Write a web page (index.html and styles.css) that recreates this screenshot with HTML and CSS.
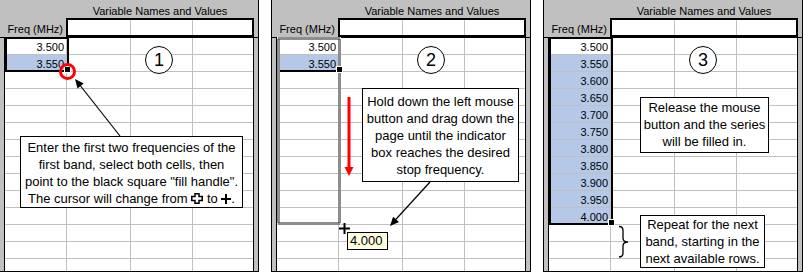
FILE: index.html
```html
<!DOCTYPE html>
<html lang="en">
<head>
    <meta charset="UTF-8">
    <meta name="viewport" content="width=device-width, initial-scale=1.0">
    <title>Filling in a frequency series</title>
    <link rel="stylesheet" href="styles.css">
</head>
<body>
    <div class="steps">
        <!-- Step 1: select the first two cells -->
        <div class="sheet">
            <div class="head">
                <div class="title">Variable Names and Values</div>
                <div class="head-row">
                    <div class="freq-label">Freq (MHz)</div>
                    <div class="names"><span></span><span></span><span></span></div>
                </div>
            </div>
            <div class="sheet-body">
                <div class="row-head"></div>
                <div class="cells">
                    <div class="cell">3.500</div>
                    <div class="cell picked">3.550</div>
                </div>
                <div class="row-tail"></div>
            </div>
            <div class="selection sel-two"></div>
            <svg class="marks" viewBox="0 0 258 271">
                <line x1="120" y1="136" x2="79" y2="84" stroke="#000" stroke-width="1.2"/>
                <polygon points="75,79 83.7,83.6 77.5,88.6" fill="#000"/>
            </svg>
            <div class="fill-handle"></div>
            <div class="red-ring"></div>
            <div class="step-num">1</div>
            <div class="note note-enter">
                Enter the first two frequencies of the<br>
                first band, select both cells, then<br>
                point to the black square "fill handle".<br>
                The cursor will change from
                <svg class="ico" width="12" height="11" viewBox="0 0 12 11"><path d="M4 .75H8V3.5H11.25V7.5H8V10.25H4V7.5H.75V3.5H4Z" fill="#fff" stroke="#000" stroke-width="1.5"/></svg>
                to <svg class="ico" width="10" height="10" viewBox="0 0 10 10"><path d="M5 0V10M0 5H10" stroke="#000" stroke-width="2"/></svg>.
            </div>
        </div>

        <!-- Step 2: drag the fill handle -->
        <div class="sheet">
            <div class="head">
                <div class="title">Variable Names and Values</div>
                <div class="head-row">
                    <div class="freq-label">Freq (MHz)</div>
                    <div class="names"><span></span><span></span><span></span></div>
                </div>
            </div>
            <div class="sheet-body">
                <div class="row-head"></div>
                <div class="cells">
                    <div class="cell">3.500</div>
                    <div class="cell picked">3.550</div>
                </div>
                <div class="row-tail"></div>
            </div>
            <div class="selection sel-two"></div>
            <svg class="marks" viewBox="0 0 258 271">
                <rect x="6.5" y="38.5" width="61" height="185" fill="none" stroke="#e8e8e8" stroke-width="3"/>
                <rect x="6.5" y="38.5" width="61" height="185" fill="none" stroke="#333" stroke-width="3" stroke-dasharray="1 1"/>
                <line x1="77" y1="97" x2="77" y2="168" stroke="#f00" stroke-width="3"/>
                <polygon points="72.5,167 81.5,167 77,176" fill="#f00"/>
                <line x1="158" y1="182" x2="121" y2="222.5" stroke="#000" stroke-width="1.2"/>
                <polygon points="118,226 127,222 121.1,216.7" fill="#000"/>
            </svg>
            <div class="fill-handle"></div>
            <div class="step-num">2</div>
            <div class="note note-drag">
                Hold down the left mouse<br>
                button and drag down the<br>
                page until the indicator<br>
                box reaches the desired<br>
                stop frequency.
            </div>
            <div class="tip">4.000</div>
            <svg class="cross-cursor" width="11" height="11" viewBox="0 0 11 11"><path d="M5.5 0V11M0 5.5H11" stroke="#000" stroke-width="2"/></svg>
        </div>

        <!-- Step 3: series filled in -->
        <div class="sheet">
            <div class="head">
                <div class="title">Variable Names and Values</div>
                <div class="head-row">
                    <div class="freq-label">Freq (MHz)</div>
                    <div class="names"><span></span><span></span><span></span></div>
                </div>
            </div>
            <div class="sheet-body">
                <div class="row-head"></div>
                <div class="cells">
                    <div class="cell">3.500</div>
                    <div class="cell picked">3.550</div>
                    <div class="cell picked">3.600</div>
                    <div class="cell picked">3.650</div>
                    <div class="cell picked">3.700</div>
                    <div class="cell picked">3.750</div>
                    <div class="cell picked">3.800</div>
                    <div class="cell picked">3.850</div>
                    <div class="cell picked">3.900</div>
                    <div class="cell picked">3.950</div>
                    <div class="cell picked">4.000</div>
                </div>
                <div class="row-tail"></div>
            </div>
            <div class="selection sel-all"></div>
            <svg class="marks" viewBox="0 0 258 271">
                <path d="M75 226.5Q79 226.5 79 230.5V238Q79 242 84 242Q79 242 79 246V253Q79 257 75 257" fill="none" stroke="#000" stroke-width="1.3"/>
            </svg>
            <div class="fill-handle handle-low"></div>
            <div class="step-num">3</div>
            <div class="note note-release">
                Release the mouse<br>
                button and the series<br>
                will be filled in.
            </div>
            <div class="note note-repeat">
                Repeat for the next<br>
                band, starting in the<br>
                next available rows.
            </div>
        </div>
    </div>
</body>
</html>
```

FILE: styles.css
```css
/* Global Styles */
* {
    box-sizing: border-box;
}
body {
    margin: 0;
    background: #fff;
    color: #000;
    font-family: "Liberation Sans", Arial, sans-serif;
}
.steps {
    display: flex;
    gap: 12px;
    margin-left: -1px;
}

/* Spreadsheet frame */
.sheet {
    position: relative;
    flex: none;
    width: 260px;
    height: 272px;
    background: #c0c0c0;
    border: 1px solid #000;
    border-top: 0;
    overflow: hidden;
}
.head {
    height: 38px;
    padding-left: 5px;
    border-bottom: 1px solid #000;
    font-size: 11px;
}
.title {
    margin-left: 61px;
    width: 188px;
    padding-top: 5px;
    line-height: 13px;
    text-align: center;
    white-space: nowrap;
}
.head-row {
    display: flex;
    height: 19px;
}
.freq-label {
    width: 61px;
    padding: 4px 3px 0 0;
    line-height: 15px;
    text-align: right;
    white-space: nowrap;
}
.names {
    display: flex;
    width: 188px;
    height: 19px;
    border: 2px solid #000;
    background: #fff;
}
.names span {
    border-right: 1px solid #c0c0c0;
}
.names span:nth-child(1) {
    width: 63px;
}
.names span:nth-child(2) {
    width: 62px;
}
.names span:last-child {
    flex: 1;
    border-right: 0;
}

.sheet-body {
    display: flex;
    height: 233px;
}
.row-head {
    width: 5px;
    border-right: 1px solid #000;
}
.row-tail {
    width: 5px;
    border-left: 1px solid #000;
}
.cells {
    width: 248px;
    background-color: #fff;
    background-image:
        linear-gradient(#c0c0c0, #c0c0c0),
        linear-gradient(#c0c0c0, #c0c0c0),
        linear-gradient(#c0c0c0, #c0c0c0),
        repeating-linear-gradient(#fff 0 16px, #c0c0c0 16px 17px);
    background-size: 1px 100%, 1px 100%, 1px 100%, 100% 100%;
    background-position: 61px 0, 125px 0, 187px 0, 0 0;
    background-repeat: no-repeat;
}
.cell {
    width: 61px;
    height: 17px;
    padding: 2px 2px 0 0;
    border-bottom: 1px solid #c0c0c0;
    font-size: 11px;
    line-height: 14px;
    text-align: right;
}
.cell.picked {
    background: #b6c8e8;
}

/* Marks drawn over the sheet */
.selection {
    position: absolute;
    left: 5px;
    top: 37px;
    width: 64px;
    border: 2px solid #000;
}
.sel-two {
    height: 35px;
}
.sel-all {
    height: 188px;
}
.marks {
    position: absolute;
    left: 0;
    top: 0;
    width: 258px;
    height: 271px;
    overflow: visible;
}
.fill-handle {
    position: absolute;
    left: 65px;
    top: 67px;
    width: 5px;
    height: 5px;
    background: #000;
    box-shadow: 0 0 0 1px #fff;
}
.handle-low {
    top: 220px;
}
.red-ring {
    position: absolute;
    left: 59px;
    top: 63px;
    width: 17px;
    height: 17px;
    border: 3px solid #f00;
    border-radius: 50%;
}
.step-num {
    position: absolute;
    left: 145px;
    top: 46px;
    width: 28px;
    height: 28px;
    border: 1px solid #000;
    border-radius: 50%;
    background: #fff;
    font-size: 18px;
    line-height: 26px;
    text-align: center;
}

/* Callouts */
.note {
    position: absolute;
    background: #fff;
    border: 1px solid #000;
    font-size: 13px;
    line-height: 17px;
    text-align: center;
    white-space: nowrap;
}
.note-enter {
    left: 20px;
    top: 136px;
    width: 223px;
    height: 72px;
    padding-top: 2px;
}
.note-drag {
    left: 90px;
    top: 88px;
    width: 157px;
    height: 94px;
    padding-top: 4px;
}
.note-release {
    left: 96px;
    top: 97px;
    width: 129px;
    height: 56px;
    padding-top: 1px;
}
.note-repeat {
    left: 96px;
    top: 215px;
    width: 125px;
    height: 53px;
}
.ico {
    vertical-align: -1px;
}
.tip {
    position: absolute;
    left: 75px;
    top: 232px;
    width: 41px;
    height: 18px;
    padding-left: 2px;
    background: #ffffe1;
    border: 1px solid #000;
    font-size: 13px;
    line-height: 16px;
}
.cross-cursor {
    position: absolute;
    left: 67px;
    top: 223px;
}
```
